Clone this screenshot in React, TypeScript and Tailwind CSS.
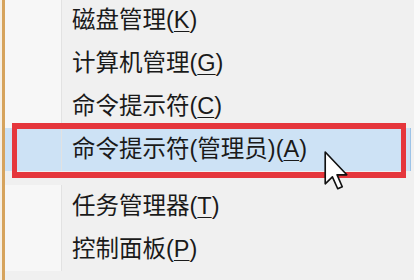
import React from "react";

type Item = { label: string; key: string; gap?: boolean; active?: boolean };

const items: Item[] = [
  { label: "磁盘管理", key: "K" },
  { label: "计算机管理", key: "G" },
  { label: "命令提示符", key: "C" },
  { label: "命令提示符(管理员)", key: "A", active: true },
  { label: "任务管理器", key: "T", gap: true },
  { label: "控制面板", key: "P" },
];

function Cursor() {
  return (
    <svg
      className="absolute left-[324px] top-[151px] w-[25px] h-[39px]"
      viewBox="0 0 12 19"
      aria-hidden="true"
    >
      <path
        d="M0.5 0.5 L0.5 16 L4 12.6 L6.6 18.4 L8.8 17.4 L6.3 11.6 L11 11.6 Z"
        fill="#ffffff"
        stroke="#111"
        strokeWidth="0.8"
        strokeLinejoin="round"
      />
    </svg>
  );
}

export default function App() {
  return (
    <div
      className="relative w-[420px] h-[280px] overflow-hidden flex bg-[#fafafa] text-[23.5px] text-[#1a1a1a]"
      style={{ fontFamily: '"Liberation Sans", "Noto Sans CJK SC", sans-serif' }}
    >
      <div className="w-[2px] shrink-0 bg-[#f6efe4]" />
      <div className="w-[3px] shrink-0 bg-[#d6a35c]" />
      <div className="w-[409px] shrink-0 bg-[#f0f0f0] flex flex-col -mt-[1px]">
        {items.map((item) => (
          <div key={item.label} className={item.gap ? "mt-[14px]" : ""}>
            <div
              className={`relative h-[43px] flex items-center ${
                item.active ? "bg-[#cde2f5] mr-[3px] border-r border-[#9cc3e8]" : ""
              }`}
            >
              <div
                className={`w-[57px] h-full shrink-0 border-r border-[#e2e2e2] ${
                  item.active ? "" : "bg-[#f7f7f7]"
                }`}
              />
              <span className="pl-[10px] leading-none whitespace-nowrap">
                {item.label}(<u className="underline-offset-[3px] decoration-1">{item.key}</u>)
              </span>
              {item.active && (
                <div className="absolute left-[7px] right-[4px] -top-[5px] -bottom-[7px] border-y-[6px] border-x-[5px] border-[#e5363c]" />
              )}
            </div>
          </div>
        ))}
      </div>
      <Cursor />
    </div>
  );
}
